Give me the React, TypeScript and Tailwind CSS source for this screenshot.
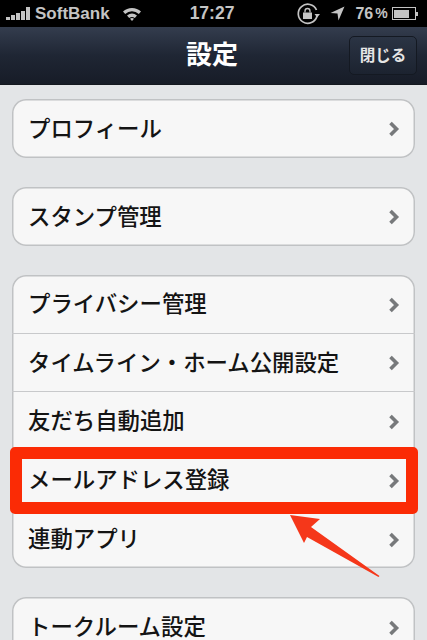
const font = { fontFamily: '"Liberation Sans", "Noto Sans CJK JP", sans-serif' };

function Chevron() {
  return (
    <svg width="12" height="16" viewBox="0 0 12 16" className="mt-[2px] shrink-0">
      <path d="M2.5 2 L8.5 8 L2.5 14" fill="none" stroke="#77797b" strokeWidth="3.6" />
    </svg>
  );
}

function Row({ label, last }: { label: string; last?: boolean }) {
  return (
    <div className={`flex h-[58.6px] items-center justify-between pl-[16px] pr-[15px] ${last ? "" : "border-b border-[#c8c9cb]"}`}>
      <span className="pt-[3px] text-[22.4px] font-medium leading-none text-[#141414]">{label}</span>
      <Chevron />
    </div>
  );
}

function Group({ rows }: { rows: string[] }) {
  return (
    <div className="mx-[12px] mb-[29.4px] rounded-[14px] bg-[#f7f7f7] shadow-[inset_0_0_0_1.5px_#c0c2c4]">
      {rows.map((r, i) => (
        <Row key={r} label={r} last={i === rows.length - 1} />
      ))}
    </div>
  );
}

function StatusBar() {
  return (
    <div className="flex h-[27px] items-center bg-black pl-[6px] font-bold text-[#c4c4c4]">
      <div className="flex items-end gap-[1px]">
        <span className="h-[3px] w-[4px] bg-[#c4c4c4]" />
        <span className="h-[5px] w-[4px] bg-[#c4c4c4]" />
        <span className="h-[7px] w-[4px] bg-[#c4c4c4]" />
        <span className="h-[9px] w-[4px] bg-[#c4c4c4]" />
        <span className="h-[13px] w-[4px] bg-[#c4c4c4]" />
      </div>
      <span className="ml-[5px] text-[17px]">SoftBank</span>
      <svg width="20" height="15" viewBox="0 0 20 15" className="ml-[12px]">
        <path d="M1 5.5 A13 13 0 0 1 19 5.5 L16.8 8 A10 10 0 0 0 3.2 8 Z M5 9.5 A8 8 0 0 1 15 9.5 L12.8 12 A4.5 4.5 0 0 0 7.2 12 Z M10 15 L8 12.8 A3 3 0 0 1 12 12.8 Z" fill="#c4c4c4" />
      </svg>
      <span className="ml-[48px] text-[17.5px]">17:27</span>
      <svg width="24" height="24" viewBox="0 0 24 24" className="ml-[62px]">
        <path d="M21 14 A9.5 9.5 0 1 1 20.5 8" fill="none" stroke="#c4c4c4" strokeWidth="1.7" />
        <path d="M18.5 12 L24 12 L21.2 15.5 Z" fill="#c4c4c4" />
        <rect x="7" y="10.5" width="9" height="6.5" fill="#c4c4c4" />
        <path d="M9 10.5 V9 A2.5 2.5 0 0 1 14 9 V10.5" fill="none" stroke="#c4c4c4" strokeWidth="1.3" />
      </svg>
      <svg width="15" height="15" viewBox="0 0 15 15" className="ml-[10px]">
        <path d="M14.5 0.5 L0.5 7 L7.5 7.5 L8.5 14.5 Z" fill="#c4c4c4" />
      </svg>
      <span className="ml-[10px] text-[16px]">76</span>
      <span className="ml-[2px] text-[14px]">%</span>
      <div className="ml-[4px] flex items-center">
        <div className="h-[13px] w-[24px] border border-[#c4c4c4] p-[1.5px]">
          <div className="h-full w-[15px] bg-[#c4c4c4]" />
        </div>
        <span className="h-[4px] w-[2px] bg-[#c4c4c4]" />
      </div>
    </div>
  );
}

function NavBar() {
  return (
    <div className="relative flex h-[58px] items-center justify-center border-b border-[#14181f] bg-gradient-to-b from-[#343d4e] via-[#1f2634] to-[#171c27]">
      <span className="mr-[3px] text-[26px] font-bold text-white">設定</span>
      <div className="absolute right-[10px] top-[9px] flex h-[39px] w-[68px] items-center justify-center rounded-[5px] border border-[#141922] bg-gradient-to-b from-[#2b3444] to-[#1c2330] text-[15.5px] font-bold text-[#e6e6e6]">
        閉じる
      </div>
    </div>
  );
}

export default function App() {
  return (
    <div className="relative h-[640px] w-[427px] overflow-hidden bg-[#e3e5e7]" style={font}>
      <StatusBar />
      <NavBar />
      <div className="pt-[14px]">
        <Group rows={["プロフィール"]} />
        <Group rows={["スタンプ管理"]} />
        <Group rows={["プライバシー管理", "タイムライン・ホーム公開設定", "友だち自動追加", "メールアドレス登録", "連動アプリ"]} />
        <Group rows={["トークルーム設定"]} />
      </div>
      {/* annotation drawn on top of the screenshot */}
      <div className="absolute left-[10px] top-[447px] h-[67px] w-[408px] rounded-[5px] border-[12px] border-[#fb2b05]" />
      <svg width="110" height="80" viewBox="0 0 110 80" className="absolute left-[285px] top-[510px]">
        <path d="M5 5 L35 9 L26 17 L94.5 66 L93.5 67 L22 27 L19 33 Z" fill="#f5371a" />
      </svg>
    </div>
  );
}
